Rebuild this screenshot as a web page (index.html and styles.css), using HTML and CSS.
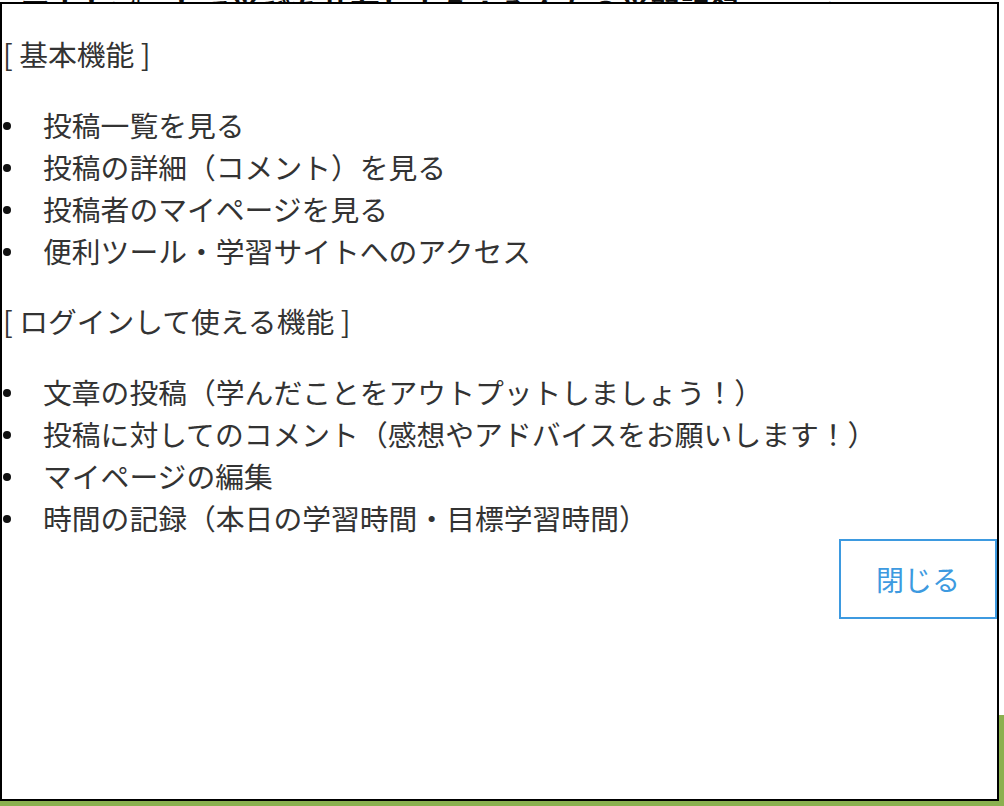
FILE: index.html
```html
<!DOCTYPE html>
<html lang="ja">
<head>
<meta charset="utf-8">
<title>機能一覧</title>
<link rel="stylesheet" href="styles.css">
</head>
<body>
<header class="site-header">
  <h1 class="site-title">アウトプットで学びを共有しよう！みんなの学習記録</h1>
  <span class="site-nav">ログイン</span>
</header>
<main class="page">
  <section class="intro"></section>
  <section class="green-area"></section>
</main>

<div class="modal">
  <p class="modal-heading">[ 基本機能 ]</p>
  <ul class="feature-list">
    <li>投稿一覧を見る</li>
    <li>投稿の詳細（コメント）を見る</li>
    <li>投稿者のマイページを見る</li>
    <li>便利ツール・学習サイトへのアクセス</li>
  </ul>
  <p class="modal-heading">[ ログインして使える機能 ]</p>
  <ul class="feature-list feature-list-last">
    <li>文章の投稿（学んだことをアウトプットしましょう！）</li>
    <li>投稿に対してのコメント（感想やアドバイスをお願いします！）</li>
    <li>マイページの編集</li>
    <li>時間の記録（本日の学習時間・目標学習時間）</li>
  </ul>
  <div class="modal-actions">
    <button class="close-button" type="button">閉じる</button>
  </div>
</div>
</body>
</html>
```

FILE: styles.css
```css
html, body {
  margin: 0;
  padding: 0;
  background: #fff;
  font-family: "Noto Sans CJK JP", "Noto Sans", sans-serif;
  color: #333;
}

.site-header {
  display: flex;
  align-items: flex-start;
  gap: 60px;
  padding: 0 0 0 20px;
  height: 120px;
}

.site-title {
  margin: -5px 0 0;
  font-weight: 700;
  font-size: 30px;
  line-height: 1;
  color: #111;
  white-space: nowrap;
}

.site-nav {
  margin-top: -4px;
  font-size: 16px;
  color: #999;
}

.page {
  display: flex;
  flex-direction: column;
}

.intro {
  height: 595px;
}

.green-area {
  height: 300px;
  background: #8bb04f;
}

.modal {
  position: fixed;
  left: 0;
  top: 2px;
  width: 999px;
  height: 799px;
  box-sizing: border-box;
  border: 2px solid #000;
  background: #fff;
  padding: 0 0 0 1px;
  font-size: 28.8px;
  line-height: 42px;
  color: #333;
}

.modal-heading {
  margin: 28.8px 0;
}

.feature-list {
  margin: 28.8px 0;
  padding-left: 0;
  list-style: none;
}

.feature-list li {
  display: flex;
  align-items: center;
}

.feature-list li::before {
  content: "";
  flex: none;
  width: 8px;
  height: 8px;
  border-radius: 50%;
  background: #111;
  margin: 2px 32px 0 0;
}

.feature-list-last {
  margin-bottom: 0;
}

.modal-actions {
  display: flex;
  justify-content: flex-end;
}

.close-button {
  font-family: inherit;
  font-size: 28px;
  line-height: 42px;
  color: #3d9ae0;
  background: #fff;
  border: 2px solid #3d9ae0;
  padding: 17px 35px;
  margin: 0;
  cursor: pointer;
}
```
